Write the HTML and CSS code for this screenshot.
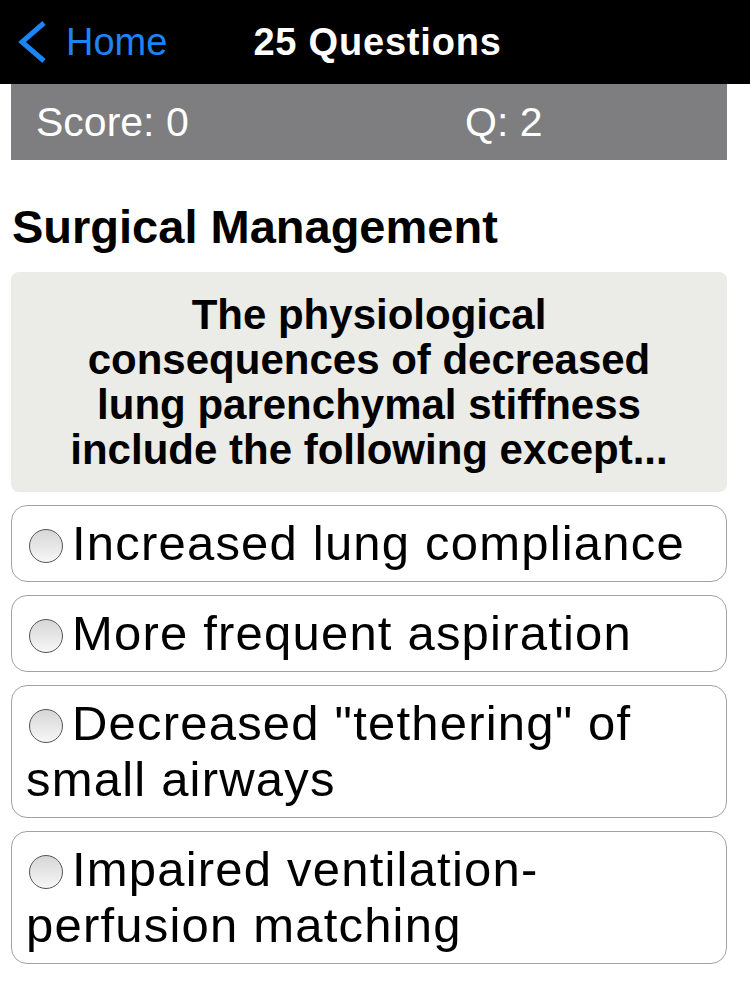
FILE: index.html
```html
<!DOCTYPE html>
<html lang="en">
<head>
    <meta charset="UTF-8">
    <meta name="viewport" content="width=device-width, initial-scale=1.0">
    <title>25 Questions</title>
    <link rel="stylesheet" href="styles.css">
</head>
<body>
<div class="navbar">
    <a class="back" href="#">
        <svg class="chevron" width="32" height="44" viewBox="0 0 32 44">
            <polyline points="27,3 5,22 27,41" fill="none" stroke="#1d84f6" stroke-width="5" stroke-linejoin="miter"/>
        </svg>
        <span class="back-label">Home</span>
    </a>
    <div class="nav-title">25 Questions</div>
</div>

<div class="score-bar">
    <div class="score">Score: 0</div>
    <div class="qnum">Q: 2</div>
</div>

<h1 class="category">Surgical Management</h1>

<div class="question">
    The physiological consequences of decreased lung parenchymal stiffness include the following except...
</div>

<div class="answers">
    <label class="answer"><input type="radio" name="answer"><span class="radio"></span>Increased lung compliance</label>
    <label class="answer"><input type="radio" name="answer"><span class="radio"></span>More frequent aspiration</label>
    <label class="answer"><input type="radio" name="answer"><span class="radio"></span>Decreased "tethering" of small airways</label>
    <label class="answer"><input type="radio" name="answer"><span class="radio"></span>Impaired ventilation-perfusion matching</label>
</div>
</body>
</html>
```

FILE: styles.css
```css
* {
    margin: 0;
    padding: 0;
    box-sizing: border-box;
    font-family: "Liberation Sans", Arial, sans-serif;
}

body {
    background-color: white;
    color: black;
}

.navbar {
    display: flex;
    align-items: center;
    height: 84px;
    background-color: black;
}

.back {
    display: flex;
    align-items: center;
    margin-left: 17px;
    text-decoration: none;
}

.chevron {
    display: block;
}

.back-label {
    margin-left: 17px;
    font-size: 38px;
    color: #1d84f6;
}

.nav-title {
    margin-left: 86px;
    font-size: 38px;
    font-weight: bold;
    letter-spacing: 0.8px;
    color: white;
}

.score-bar {
    display: grid;
    grid-template-columns: 429px 1fr;
    align-items: center;
    width: 716px;
    height: 76px;
    margin-left: 11px;
    padding-left: 25px;
    background-color: #7e7d7f;
    color: white;
    font-size: 41px;
}

.category {
    margin: 39px 0 18px 12px;
    font-size: 47px;
    font-weight: bold;
}

.question {
    width: 716px;
    margin-left: 11px;
    padding: 20px 40px;
    background-color: #ebebe7;
    border-radius: 8px;
    text-align: center;
    font-size: 42px;
    font-weight: bold;
    line-height: 45px;
}

.answers {
    width: 716px;
    margin-left: 11px;
}

.answer {
    display: block;
    margin-top: 13px;
    padding: 9px 14px 10px;
    border: 1.5px solid #a2a2a2;
    border-radius: 16px;
    font-size: 49px;
    letter-spacing: 1.2px;
    line-height: 56px;
    cursor: pointer;
}

.answer input {
    display: none;
}

.radio {
    display: inline-block;
    width: 34px;
    height: 34px;
    margin: 0 9px 0 3px;
    border: 1.5px solid #555;
    border-radius: 50%;
    background: linear-gradient(to bottom, #d6d6d6, #f7f7f7);
    vertical-align: -3px;
}

.answer input:checked + .radio {
    background: radial-gradient(circle, #333 35%, #e6e6e6 40%);
}
```
